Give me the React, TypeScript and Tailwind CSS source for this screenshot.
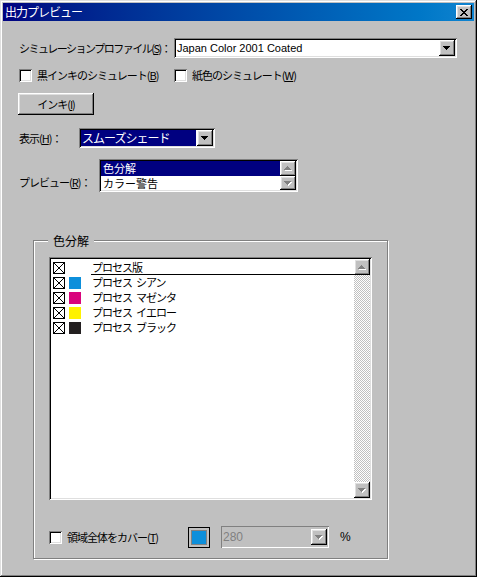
import React from "react";

const raised =
  "shadow-[inset_-1px_-1px_#000,inset_1px_1px_#fff,inset_-2px_-2px_#808080,inset_2px_2px_#dfdfdf]";
const sunken =
  "shadow-[inset_1px_1px_#808080,inset_-1px_-1px_#fff,inset_2px_2px_#000,inset_-2px_-2px_#dfdfdf]";

function Arrow({ up = false, disabled = false }: { up?: boolean; disabled?: boolean }) {
  const pts = up ? "0,4 7,4 3.5,0" : "0,0 7,0 3.5,4";
  return (
    <svg width="8" height="5" viewBox="0 0 8 5" shapeRendering="crispEdges">
      {disabled && <polygon points={pts} fill="#fff" transform="translate(1,1)" />}
      <polygon points={pts} fill={disabled ? "#808080" : "#000"} />
    </svg>
  );
}

function DropButton({ disabled = false }: { disabled?: boolean }) {
  return (
    <div className={`w-[16px] h-[16px] bg-[#c0c0c0] flex items-center justify-center shrink-0 ${raised}`}>
      <Arrow disabled={disabled} />
    </div>
  );
}

function ScrollButton({ up = false, h = "h-[16px]" }: { up?: boolean; h?: string }) {
  return (
    <div className={`w-[16px] ${h} bg-[#c0c0c0] flex items-center justify-center shrink-0 ${raised}`}>
      <Arrow up={up} disabled />
    </div>
  );
}

function Checkbox() {
  return <div className={`w-[13px] h-[13px] bg-white shrink-0 ${sunken}`} />;
}

function XBox() {
  return (
    <svg width="12" height="12" viewBox="0 0 12 12" className="shrink-0">
      <rect x="0.5" y="0.5" width="11" height="11" fill="#fff" stroke="#000" />
      <path d="M1 1L11 11M11 1L1 11" stroke="#000" strokeWidth="1" />
    </svg>
  );
}

function Key({ k }: { k: string }) {
  return (
    <>
      (<span className="underline">{k}</span>)
    </>
  );
}

export default function App() {
  const plates = [
    { name: "プロセス版", suffix: "", color: "" },
    { name: "プロセス", suffix: "シアン", color: "bg-[#0d8fdb]" },
    { name: "プロセス", suffix: "マゼンタ", color: "bg-[#d9047c]" },
    { name: "プロセス", suffix: "イエロー", color: "bg-[#fff200]" },
    { name: "プロセス", suffix: "ブラック", color: "bg-[#231f20]" },
  ];

  return (
    <div
      className={`w-[477px] h-[577px] bg-[#c0c0c0] p-[3px] flex flex-col text-black text-[11px] tracking-[-1px] font-['Noto_Sans_CJK_JP',sans-serif] shadow-[inset_-1px_-1px_#000,inset_1px_1px_#dfdfdf,inset_-2px_-2px_#808080,inset_2px_2px_#fff]`}
    >
      {/* Title bar */}
      <div className="h-[18px] shrink-0 flex items-center justify-between pl-[2px] pr-[2px] bg-linear-to-r from-[#000080] to-[#1084d0]">
        <span className="text-white text-[12px] leading-none">出力プレビュー</span>
        <div className={`w-[16px] h-[14px] bg-[#c0c0c0] flex items-center justify-center ${raised}`}>
          <svg width="8" height="7" viewBox="0 0 8 7" shapeRendering="crispEdges">
            <path d="M0 0h2v1h1v1h2V1h1V0h2v1H7v1H6v1H5v1h1v1h1v1h1v1H6V6H5V5H3v1H2v1H0V6h1V5h1V4h1V3H2V2H1V1H0z" fill="#000" />
          </svg>
        </div>
      </div>

      <div className="flex flex-col pl-[16px]">
        {/* Simulation profile */}
        <div className="mt-[17px] flex items-center h-[20px]">
          <div className="w-[155px] whitespace-nowrap tracking-[-1.5px]">
            シミュレーションプロファイル<Key k="S" />：
          </div>
          <div className={`w-[283px] h-[20px] bg-white flex items-center pl-[3px] pr-[2px] ${sunken}`}>
            <span className="flex-1 font-['Liberation_Sans',sans-serif] text-[11px] tracking-normal">
              Japan Color 2001 Coated
            </span>
            <DropButton />
          </div>
        </div>

        {/* Checkboxes */}
        <div className="mt-[11px] flex items-center h-[13px]">
          <div className="w-[155px] flex items-center gap-[5px]">
            <Checkbox />
            <span className="whitespace-nowrap">
              黒インキのシミュレート<Key k="B" />
            </span>
          </div>
          <div className="flex items-center gap-[5px]">
            <Checkbox />
            <span className="whitespace-nowrap">
              紙色のシミュレート<Key k="W" />
            </span>
          </div>
        </div>

        {/* Ink button */}
        <div className={`mt-[11px] -ml-px w-[76px] h-[22px] flex items-center justify-center ${raised}`}>
          インキ<Key k="I" />
        </div>

        {/* Display */}
        <div className="mt-[13px] flex items-center h-[20px]">
          <div className="w-[60px] whitespace-nowrap">
            表示<Key k="H" />：
          </div>
          <div className={`w-[136px] h-[20px] bg-white flex items-center p-[2px] ${sunken}`}>
            <div className="flex-1 h-full bg-[#000080] text-white flex items-center pl-[1px] mr-[1px] text-[12px] leading-none">
              スムーズシェード
            </div>
            <DropButton />
          </div>
        </div>

        {/* Preview */}
        <div className="mt-[11px] flex items-end h-[33px]">
          <div className="w-[80px] whitespace-nowrap pb-[2px]">
            プレビュー<Key k="R" />：
          </div>
          <div className={`w-[199px] h-[33px] bg-white flex p-[2px] ${sunken}`}>
            <div className="flex-1 flex flex-col text-[11px] leading-none tracking-normal">
              <div className="h-[15px] bg-[#000080] text-white flex items-center pl-[2px]">色分解</div>
              <div className="h-[14px] flex items-center pl-[2px]">カラー警告</div>
            </div>
            <div className="flex flex-col">
              <ScrollButton up h="h-[15px]" />
              <ScrollButton h="h-[14px]" />
            </div>
          </div>
        </div>

        {/* Separations group */}
        <div className="mt-[48px] ml-[14px] w-[355px] h-[319px] border border-[#808080] shadow-[inset_1px_1px_#fff,1px_1px_#fff] flex flex-col">
          <div className="-mt-[8px] ml-[14px] w-fit px-[5px] h-[15px] leading-[15px] bg-[#c0c0c0] text-[12px] tracking-normal">
            色分解
          </div>

          <div className={`mt-[9px] ml-[15px] w-[323px] h-[243px] bg-white flex p-[2px] ${sunken}`}>
            <div className="flex-1 flex flex-col pt-[1px]">
              {plates.map((p, i) => (
                <div key={p.name + p.suffix} className="h-[15px] flex items-center pl-[2px]">
                  <XBox />
                  <div className={`ml-[4px] w-[12px] h-[12px] shrink-0 ${p.color}`} />
                  <div
                    className={`ml-[10px] flex-1 h-full flex items-center pl-[1px] text-[11px] leading-none whitespace-nowrap ${
                      i === 0 ? "border-b border-black" : ""
                    }`}
                  >
                    <span>{p.name}</span>
                    {p.suffix && <span className="ml-[4px]">{p.suffix}</span>}
                  </div>
                </div>
              ))}
            </div>
            <div className="flex flex-col w-[16px]">
              <ScrollButton up />
              <div className="flex-1 bg-[repeating-conic-gradient(#c0c0c0_0%_25%,#fff_0%_50%)] bg-size-[2px_2px]" />
              <ScrollButton />
            </div>
          </div>

          {/* Cover area */}
          <div className="mt-[26px] ml-[15px] flex items-center h-[22px]">
            <div className="w-[139px] flex items-center gap-[5px]">
              <Checkbox />
              <span className="whitespace-nowrap">
                領域全体をカバー<Key k="T" />
              </span>
            </div>
            <div className="w-[22px] h-[21px] border border-black bg-[#c0c0c0] p-[2px]">
              <div className="w-full h-full border border-[#808080] bg-[#0d8fdb]" />
            </div>
            <div className="ml-[11px] w-[108px] h-[22px] flex items-center pl-[2px] pr-[2px] shadow-[inset_1px_1px_#808080,inset_-1px_-1px_#fff]">
              <span className="flex-1 text-[#808080] font-['Liberation_Sans',sans-serif] text-[12px] tracking-normal">
                280
              </span>
              <DropButton disabled />
            </div>
            <span className="ml-[11px] font-['Liberation_Sans',sans-serif] text-[12px] tracking-normal">%</span>
          </div>
        </div>
      </div>
    </div>
  );
}
